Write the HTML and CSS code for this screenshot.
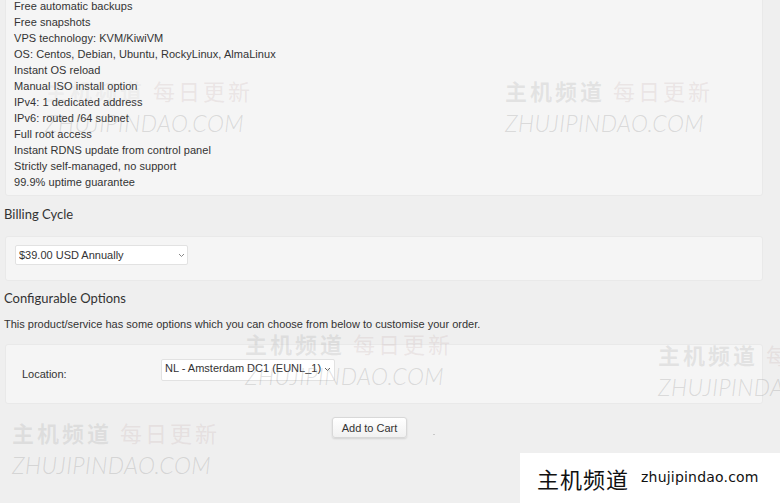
FILE: index.html
```html
<!DOCTYPE html>
<html>
<head>
<meta charset="utf-8">
<link rel="stylesheet" href="styles.css">
</head>
<body>
<div class="page">
  <div class="panel features">
    <div>Free automatic backups</div>
    <div>Free snapshots</div>
    <div>VPS technology: KVM/KiwiVM</div>
    <div>OS: Centos, Debian, Ubuntu, RockyLinux, AlmaLinux</div>
    <div>Instant OS reload</div>
    <div>Manual ISO install option</div>
    <div>IPv4: 1 dedicated address</div>
    <div>IPv6: routed /64 subnet</div>
    <div>Full root access</div>
    <div>Instant RDNS update from control panel</div>
    <div>Strictly self-managed, no support</div>
    <div>99.9% uptime guarantee</div>
  </div>

  <h3 class="heading billing-heading">Billing Cycle</h3>
  <div class="panel billing">
    <div class="select-wrap billing-select">
      <select class="select"><option>$39.00 USD Annually</option></select>
      <svg class="chev" width="7" height="5" viewBox="0 0 7 5"><path d="M1 1l2.5 2.5L6 1" fill="none" stroke="#888" stroke-width="1"/></svg>
    </div>
  </div>

  <h3 class="heading config-heading">Configurable Options</h3>
  <p class="desc">This product/service has some options which you can choose from below to customise your order.</p>
  <div class="panel config">
    <label class="label">Location:</label>
    <div class="select-wrap loc-select">
      <select class="select"><option>NL - Amsterdam DC1 (EUNL_1)</option></select>
      <svg class="chev" width="7" height="5" viewBox="0 0 7 5"><path d="M1 1l2.5 2.5L6 1" fill="none" stroke="#666" stroke-width="1"/></svg>
    </div>
  </div>

  <div class="actions">
    <button class="btn">Add to Cart</button>
    <span class="dot"></span>
  </div>
</div>

<div class="wm wm1"><div class="wm-cn"><span class="wm-a">主机频道</span> <span class="wm-b">每日更新</span></div><div class="wm-en">ZHUJIPINDAO.COM</div></div>
<div class="wm wm2"><div class="wm-cn"><span class="wm-a">主机频道</span> <span class="wm-b">每日更新</span></div><div class="wm-en">ZHUJIPINDAO.COM</div></div>
<div class="wm wm3"><div class="wm-cn"><span class="wm-a">主机频道</span> <span class="wm-b">每日更新</span></div><div class="wm-en">ZHUJIPINDAO.COM</div></div>
<div class="wm wm4"><div class="wm-cn"><span class="wm-a">主机频道</span> <span class="wm-b">每日更新</span></div><div class="wm-en">ZHUJIPINDAO.COM</div></div>
<div class="wm wm5"><div class="wm-cn"><span class="wm-a">主机频道</span> <span class="wm-b">每日更新</span></div><div class="wm-en">ZHUJIPINDAO.COM</div></div>

<div class="logo-box">
  <span class="logo-cn">主机频道</span>
  <span class="logo-en">zhujipindao.com</span>
</div>
</body>
</html>
```

FILE: styles.css
```css
html, body {
  margin: 0;
  padding: 0;
}
body {
  background: #efefef;
  color: #333;
  font-family: "Liberation Sans", Arial, sans-serif;
  font-size: 11px;
  line-height: 16px;
  width: 780px;
  height: 503px;
  overflow: hidden;
  position: relative;
}
.page {
  padding-left: 5px;
  width: 758px;
}
.panel {
  background: #f5f5f5;
  border: 1px solid #e9e9e9;
  border-radius: 3px;
  box-sizing: border-box;
}
.features {
  margin-top: -10px;
  padding: 7px 9px 5px 8px;
  letter-spacing: 0.05px;
}
.heading {
  font-family: Lato, "Open Sans", sans-serif;
  font-weight: 400;
  font-size: 13px;
  line-height: 18px;
  color: #333;
  margin: 0;
}
.billing-heading {
  margin-top: 9px;
  margin-bottom: 13px;
  margin-left: -1px;
}
.billing {
  padding: 8px 9px 15px 9px;
}
.config-heading {
  margin-top: 8px;
  margin-left: -1px;
}
.desc {
  margin: 9px 0 12px -1px;
}
.config {
  display: grid;
  grid-template-columns: 139px 174px;
  align-items: end;
  padding: 14px 16px 22px 16px;
}
.label {
  line-height: 16px;
  position: relative;
  top: 1px;
}
.select-wrap {
  position: relative;
  width: fit-content;
}
.select {
  appearance: none;
  -webkit-appearance: none;
  display: block;
  background: #fff;
  border: 1px solid #e2e2e2;
  border-radius: 2px;
  font-family: "Liberation Sans", Arial, sans-serif;
  font-size: 11px;
  color: #333;
  margin: 0;
  box-sizing: border-box;
  outline: none;
}
.billing-select .select {
  width: 173px;
  height: 20px;
  padding: 0 0 0 3px;
}
.loc-select .select {
  width: 174px;
  height: 22px;
  padding: 0 0 4px 3px;
}
.chev {
  position: absolute;
  right: 3px;
  top: 8px;
  pointer-events: none;
}
.loc-select .chev {
  right: 4px;
  top: 8px;
}
.actions {
  display: flex;
  align-items: flex-start;
  margin-top: 13px;
  padding-left: 327px;
}
.btn {
  width: 75px;
  height: 21px;
  padding: 0;
  font-family: "Liberation Sans", Arial, sans-serif;
  font-size: 11px;
  color: #333;
  background: linear-gradient(#ffffff, #f1f1f1);
  border: 1px solid #d8d8d8;
  border-radius: 3px;
  box-shadow: 0 1px 2px rgba(0,0,0,0.12);
}
.dot {
  width: 2px;
  height: 1px;
  background: #c8c8c8;
  margin-left: 26px;
  margin-top: 17px;
}

/* watermarks */
.wm {
  position: absolute;
  pointer-events: none;
  white-space: nowrap;
}
.wm-cn {
  font-family: "Noto Sans CJK SC", sans-serif;
  font-size: 22px;
  line-height: 26px;
  letter-spacing: 3px;
}
.wm-a {
  font-weight: 700;
  color: rgba(160,160,160,0.22);
}
.wm-b {
  font-weight: 400;
  color: rgba(190,160,160,0.2);
}
.wm-en {
  font-family: Lato, "Liberation Sans", sans-serif;
  font-style: italic;
  font-weight: 300;
  font-size: 23px;
  line-height: 24px;
  margin-top: 8px;
  letter-spacing: 0.4px;
  color: rgba(150,150,150,0.3);
}
.wm1 { left: 45px; top: 77px; }
.wm1 .wm-a { color: rgba(160,160,160,0.1); }
.wm2 { left: 505px; top: 77px; }
.wm3 { left: 245px; top: 330px; }
.wm4 { left: 658px; top: 341px; }
.wm5 { left: 12px; top: 419px; }

.logo-box {
  position: absolute;
  left: 520px;
  top: 453px;
  width: 260px;
  height: 50px;
  background: #fff;
  display: flex;
  align-items: center;
  padding-left: 17px;
  box-sizing: border-box;
  gap: 12px;
}
.logo-cn {
  font-family: "Noto Sans CJK SC", sans-serif;
  font-size: 22px;
  color: #111;
  letter-spacing: 1px;
}
.logo-en {
  font-family: "DejaVu Sans", sans-serif;
  font-size: 14px;
  letter-spacing: 0.2px;
  color: #111;
  position: relative;
  top: -1px;
}
```
